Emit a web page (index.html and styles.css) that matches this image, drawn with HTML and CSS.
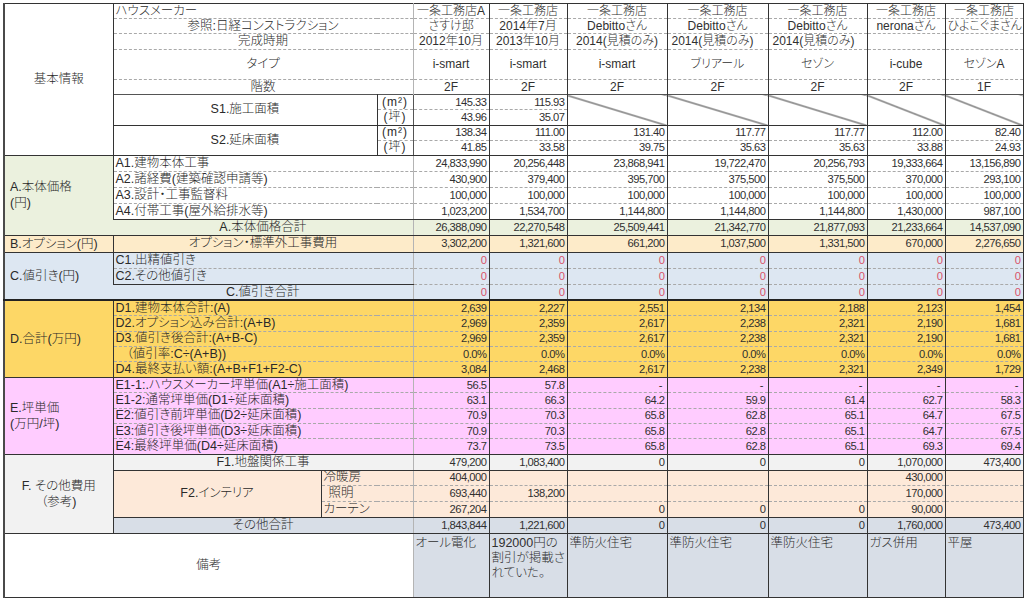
FILE: index.html
```html
<!DOCTYPE html>
<html lang="ja">
<head>
<meta charset="utf-8">
<title>見積比較</title>
<link rel="stylesheet" href="styles.css">
</head>
<body>
<table class="sheet">
<colgroup>
<col class="w-a"><col class="w-b1"><col class="w-b2"><col class="w-u">
<col class="w-d1"><col class="w-d2"><col class="w-d3"><col class="w-d4"><col class="w-d5"><col class="w-d6"><col class="w-d7">
</colgroup>
<tbody>
<tr class="rh">
<td class="cat c sec" rowspan="9">基本情報</td>
<td class="lbl" colspan="3">ハウスメーカー</td>
<td class="v c">一条工務店A</td><td class="v c">一条工務店</td><td class="v c">一条工務店</td><td class="v c">一条工務店</td><td class="v c">一条工務店</td><td class="v c">一条工務店</td><td class="v c">一条工務店</td>
</tr>
<tr class="rh">
<td class="lbl c" colspan="3">参照:日経コンストラクション</td>
<td class="v c">さすけ邸</td><td class="v c">2014年7月</td><td class="v c">Debittoさん</td><td class="v c">Debittoさん</td><td class="v c">Debittoさん</td><td class="v c">neronaさん</td><td class="v c">ひよこぐまさん</td>
</tr>
<tr class="rh">
<td class="lbl c" colspan="3">完成時期</td>
<td class="v c">2012年10月</td><td class="v c">2013年10月</td><td class="v c">2014(見積のみ)</td><td class="v l">2014(見積のみ)</td><td class="v l">2014(見積のみ)</td><td class="v"></td><td class="v"></td>
</tr>
<tr class="rh2">
<td class="lbl c" colspan="3">タイプ</td>
<td class="v c">i-smart</td><td class="v c">i-smart</td><td class="v c">i-smart</td><td class="v c">ブリアール</td><td class="v c">セゾン</td><td class="v c">i-cube</td><td class="v c">セゾンA</td>
</tr>
<tr class="rh">
<td class="lbl c" colspan="3">階数</td>
<td class="v c">2F</td><td class="v c">2F</td><td class="v c">2F</td><td class="v c">2F</td><td class="v c">2F</td><td class="v c">2F</td><td class="v c">1F</td>
</tr>
<tr class="rh topline">
<td class="lbl c box sec" colspan="2" rowspan="2">S1.施工面積</td>
<td class="unit">(m²)</td>
<td class="v">145.33</td><td class="v">115.93</td>
<td class="v diag sec" rowspan="2"></td><td class="v diag sec" rowspan="2"></td><td class="v diag sec" rowspan="2"></td><td class="v diag sec" rowspan="2"></td><td class="v diag sec" rowspan="2"></td>
</tr>
<tr class="rh sep">
<td class="unit">(坪)</td>
<td class="v">43.96</td><td class="v">35.07</td>
</tr>
<tr class="rh">
<td class="lbl c box sec" colspan="2" rowspan="2">S2.延床面積</td>
<td class="unit">(m²)</td>
<td class="v">138.34</td><td class="v">111.00</td><td class="v">131.40</td><td class="v">117.77</td><td class="v">117.77</td><td class="v">112.00</td><td class="v">82.40</td>
</tr>
<tr class="rh sep">
<td class="unit">(坪)</td>
<td class="v">41.85</td><td class="v">33.58</td><td class="v">39.75</td><td class="v">35.63</td><td class="v">35.63</td><td class="v">33.88</td><td class="v">24.93</td>
</tr>

<tr class="ra">
<td class="cat open g sec" rowspan="5">A.本体価格<br>(円)</td>
<td class="lbl boxl" colspan="3">A1.建物本体工事</td>
<td class="v">24,833,990</td><td class="v">20,256,448</td><td class="v">23,868,941</td><td class="v">19,722,470</td><td class="v">20,256,793</td><td class="v">19,333,664</td><td class="v">13,156,890</td>
</tr>
<tr class="ra">
<td class="lbl boxl" colspan="3">A2.諸経費(建築確認申請等)</td>
<td class="v">430,900</td><td class="v">379,400</td><td class="v">395,700</td><td class="v">375,500</td><td class="v">375,500</td><td class="v">370,000</td><td class="v">293,100</td>
</tr>
<tr class="ra">
<td class="lbl boxl" colspan="3">A3.設計・工事監督料</td>
<td class="v">100,000</td><td class="v">100,000</td><td class="v">100,000</td><td class="v">100,000</td><td class="v">100,000</td><td class="v">100,000</td><td class="v">100,000</td>
</tr>
<tr class="ra sep">
<td class="lbl boxl" colspan="3">A4.付帯工事(屋外給排水等)</td>
<td class="v">1,023,200</td><td class="v">1,534,700</td><td class="v">1,144,800</td><td class="v">1,144,800</td><td class="v">1,144,800</td><td class="v">1,430,000</td><td class="v">987,100</td>
</tr>
<tr class="ra sep g">
<td class="lbl c" colspan="3">A.本体価格合計</td>
<td class="v">26,388,090</td><td class="v">22,270,548</td><td class="v">25,509,441</td><td class="v">21,342,770</td><td class="v">21,877,093</td><td class="v">21,233,664</td><td class="v">14,537,090</td>
</tr>

<tr class="ra sep o">
<td class="cat">B.オプション(円)</td>
<td class="lbl c" colspan="3">オプション・標準外工事費用</td>
<td class="v">3,302,200</td><td class="v">1,321,600</td><td class="v">661,200</td><td class="v">1,037,500</td><td class="v">1,331,500</td><td class="v">670,000</td><td class="v">2,276,650</td>
</tr>

<tr class="ra b">
<td class="cat open thick" rowspan="3">C.値引き(円)</td>
<td class="lbl boxl" colspan="3">C1.出精値引き</td>
<td class="v red">0</td><td class="v red">0</td><td class="v red">0</td><td class="v red">0</td><td class="v red">0</td><td class="v red">0</td><td class="v red">0</td>
</tr>
<tr class="ra b">
<td class="lbl boxl sec" colspan="3">C2.その他値引き</td>
<td class="v red">0</td><td class="v red">0</td><td class="v red">0</td><td class="v red">0</td><td class="v red">0</td><td class="v red">0</td><td class="v red">0</td>
</tr>
<tr class="ra b thickrow">
<td class="lbl c" colspan="3">C.値引き合計</td>
<td class="v red">0</td><td class="v red">0</td><td class="v red">0</td><td class="v red">0</td><td class="v red">0</td><td class="v red">0</td><td class="v red">0</td>
</tr>

<tr class="rd y">
<td class="cat sec" rowspan="5">D.合計(万円)</td>
<td class="lbl" colspan="3">D1.建物本体合計:(A)</td>
<td class="v">2,639</td><td class="v">2,227</td><td class="v">2,551</td><td class="v">2,134</td><td class="v">2,188</td><td class="v">2,123</td><td class="v">1,454</td>
</tr>
<tr class="rd y">
<td class="lbl" colspan="3">D2.オプション込み合計:(A+B)</td>
<td class="v">2,969</td><td class="v">2,359</td><td class="v">2,617</td><td class="v">2,238</td><td class="v">2,321</td><td class="v">2,190</td><td class="v">1,681</td>
</tr>
<tr class="rd y">
<td class="lbl" colspan="3">D3.値引き後合計:(A+B-C)</td>
<td class="v">2,969</td><td class="v">2,359</td><td class="v">2,617</td><td class="v">2,238</td><td class="v">2,321</td><td class="v">2,190</td><td class="v">1,681</td>
</tr>
<tr class="rd y">
<td class="lbl ind" colspan="3">（値引率:C÷(A+B))</td>
<td class="v">0.0%</td><td class="v">0.0%</td><td class="v">0.0%</td><td class="v">0.0%</td><td class="v">0.0%</td><td class="v">0.0%</td><td class="v">0.0%</td>
</tr>
<tr class="rd y sep">
<td class="lbl" colspan="3">D4.最終支払い額:(A+B+F1+F2-C)</td>
<td class="v">3,084</td><td class="v">2,468</td><td class="v">2,617</td><td class="v">2,238</td><td class="v">2,321</td><td class="v">2,349</td><td class="v">1,729</td>
</tr>

<tr class="rd p">
<td class="cat sec" rowspan="5">E.坪単価<br>(万円/坪)</td>
<td class="lbl" colspan="3">E1-1:.ハウスメーカー坪単価(A1÷施工面積)</td>
<td class="v">56.5</td><td class="v">57.8</td><td class="v">-&nbsp;</td><td class="v">-&nbsp;</td><td class="v">-&nbsp;</td><td class="v">-&nbsp;</td><td class="v">-&nbsp;</td>
</tr>
<tr class="rd p">
<td class="lbl" colspan="3">E1-2:通常坪単価(D1÷延床面積)</td>
<td class="v">63.1</td><td class="v">66.3</td><td class="v">64.2</td><td class="v">59.9</td><td class="v">61.4</td><td class="v">62.7</td><td class="v">58.3</td>
</tr>
<tr class="rd p">
<td class="lbl" colspan="3">E2:値引き前坪単価(D2÷延床面積)</td>
<td class="v">70.9</td><td class="v">70.3</td><td class="v">65.8</td><td class="v">62.8</td><td class="v">65.1</td><td class="v">64.7</td><td class="v">67.5</td>
</tr>
<tr class="rd p">
<td class="lbl" colspan="3">E3:値引き後坪単価(D3÷延床面積)</td>
<td class="v">70.9</td><td class="v">70.3</td><td class="v">65.8</td><td class="v">62.8</td><td class="v">65.1</td><td class="v">64.7</td><td class="v">67.5</td>
</tr>
<tr class="rd p sep">
<td class="lbl" colspan="3">E4:最終坪単価(D4÷延床面積)</td>
<td class="v">73.7</td><td class="v">73.5</td><td class="v">65.8</td><td class="v">62.8</td><td class="v">65.1</td><td class="v">69.3</td><td class="v">69.4</td>
</tr>

<tr class="rf gr sep">
<td class="cat c gr sec" rowspan="5">F. その他費用<br>（参考)</td>
<td class="lbl c" colspan="3">F1.地盤関係工事</td>
<td class="v">479,200</td><td class="v">1,083,400</td><td class="v">0</td><td class="v">0</td><td class="v">0</td><td class="v">1,070,000</td><td class="v">473,400</td>
</tr>
<tr class="rf pe">
<td class="lbl c boxr sec" rowspan="3">F2.インテリア</td>
<td class="lbl" colspan="2">冷暖房</td>
<td class="v">404,000</td><td class="v"></td><td class="v"></td><td class="v"></td><td class="v"></td><td class="v">430,000</td><td class="v"></td>
</tr>
<tr class="rf pe">
<td class="lbl ind2" colspan="2">照明</td>
<td class="v">693,440</td><td class="v">138,200</td><td class="v"></td><td class="v"></td><td class="v"></td><td class="v">170,000</td><td class="v"></td>
</tr>
<tr class="rf pe sep">
<td class="lbl" colspan="2">カーテン</td>
<td class="v">267,204</td><td class="v"></td><td class="v">0</td><td class="v">0</td><td class="v">0</td><td class="v">90,000</td><td class="v"></td>
</tr>
<tr class="rf bg sep">
<td class="lbl c" colspan="3">その他合計</td>
<td class="v">1,843,844</td><td class="v">1,221,600</td><td class="v">0</td><td class="v">0</td><td class="v">0</td><td class="v">1,760,000</td><td class="v">473,400</td>
</tr>

<tr class="rn sep">
<td class="lbl c note-l" colspan="4">備考</td>
<td class="v note">オール電化</td><td class="v note">192000円の割引が掲載されていた。</td><td class="v note">準防火住宅</td><td class="v note">準防火住宅</td><td class="v note">準防火住宅</td><td class="v note">ガス併用</td><td class="v note">平屋</td>
</tr>
</tbody>
</table>
</body>
</html>
```

FILE: styles.css
```css
html, body {
  margin: 0;
  background: #ffffff;
}
body {
  width: 1024px;
  height: 598px;
  padding: 3px 0 0 3px;
  box-sizing: border-box;
  overflow: hidden;
}
.sheet {
  border-collapse: collapse;
  table-layout: fixed;
  width: 1019px;
  font-family: "Liberation Sans", "Noto Sans CJK JP", sans-serif;
  font-size: 12px;
  font-weight: 300;
  font-feature-settings: "palt" 1;
  color: #2a2a2a;
  border-top: 1px solid #333;
  border-right: 1px solid #333;
  border-left: 2px solid #4a4a4a;
}
.w-a { width: 109px; }
.w-b1 { width: 208px; }
.w-b2 { width: 56px; }
.w-u { width: 36px; }
.w-d1 { width: 76px; }
.w-d2 { width: 78px; }
.w-d3 { width: 100px; }
.w-d4 { width: 101px; }
.w-d5 { width: 99px; }
.w-d6 { width: 78px; }
.w-d7 { width: 78px; }

.rh { height: 15.2px; }
.rh2 { height: 30.4px; }
.ra { height: 16px; }
.rd { height: 15.4px; }
.rf { height: 15.8px; }
.rn { height: 64px; }

.sheet td {
  padding: 0 2px;
  border-bottom: 1px dashed #a9a9a9;
  white-space: nowrap;
  line-height: 13px;
  vertical-align: middle;
  text-align: left;
}
.sheet td.c { text-align: center; }
.sheet td.l { text-align: left; }

/* category column */
.sheet td.cat {
  padding: 0 5px;
  border-right: 1px solid #333;
  white-space: normal;
  line-height: 16px;
  font-size: 12.5px;
}
.sheet td.cat.c { text-align: center; }
.sheet td.cat.open { border-right: none; }
.sheet td.sec { border-bottom: 1px solid #333; }
.sheet td.thick { border-bottom: 2px solid #222; }

/* label cells */
.sheet td.lbl {
  border-right: 1px solid #b4b4b4;
  font-size: 12.5px;
}
.sheet td.box { border-right: 1px solid #333; }
.sheet td.boxl { border-left: 1px solid #333; background: #ffffff; }
.sheet td.boxr { border-right: 1px solid #333; }
.sheet td.ind { padding-left: 13px; }
.sheet td.ind2 { padding-left: 7px; }
.sheet td.unit {
  text-align: center;
  border-right: 1px solid #555;
  padding: 0;
  letter-spacing: 1px;
}

/* value cells */
.sheet td.v {
  text-align: right;
  border-right: 1px solid #333;
  padding: 0 2px 0 2px;
  font-weight: 400;
  font-size: 11.2px;
  letter-spacing: -0.5px;
  color: #303030;
}
.sheet td.v.c {
  text-align: center;
  font-weight: 300;
  font-size: 12px;
  letter-spacing: 0;
}
.sheet td.v.l {
  text-align: left;
  padding-left: 4px;
  font-weight: 300;
  font-size: 12px;
  letter-spacing: 0;
}
.sheet td.red { color: #d9546b; }
.sheet td.diag {
  background: linear-gradient(to top right, transparent calc(50% - 1px), #3a3a3a 50%, transparent calc(50% + 1px));
}

.sheet tr.topline > td { border-top: 1px solid #555; }
.sheet tr.sep > td { border-bottom: 1px solid #333; }
.sheet tr.thickrow > td { border-bottom: 2px solid #222; }

/* fills */
.sheet td.g, .sheet tr.g > td { background: #ebf1de; }
.sheet tr.ra > td.v { background: #ffffff; }
.sheet tr.g > td.v { background: #ebf1de; }
.sheet tr.o > td { background: #fdebc9; }
.sheet tr.b > td, .sheet tr.b > td.v { background: #dde7f2; }
.sheet tr.b > td.boxl { background: #dde7f2; }
.sheet tr.y > td { background: #fdd766; }
.sheet tr.p > td { background: #ffccff; }
.sheet tr.gr > td, .sheet td.gr { background: #f2f2f2; }
.sheet tr.pe > td { background: #fde9d9; }
.sheet tr.bg > td { background: #d8dee7; }
.sheet tr.o > td.v { background: #fdebc9; }
.sheet td.note-l { background: #ffffff; border-right: 1px solid #b4b4b4; }
.sheet td.v.note {
  background: #d8dee7;
  text-align: left;
  vertical-align: top;
  white-space: normal;
  line-height: 15px;
  padding: 2px 0 0 2px;
  font-weight: 300;
  font-size: 12.5px;
  letter-spacing: 0;
}
```
